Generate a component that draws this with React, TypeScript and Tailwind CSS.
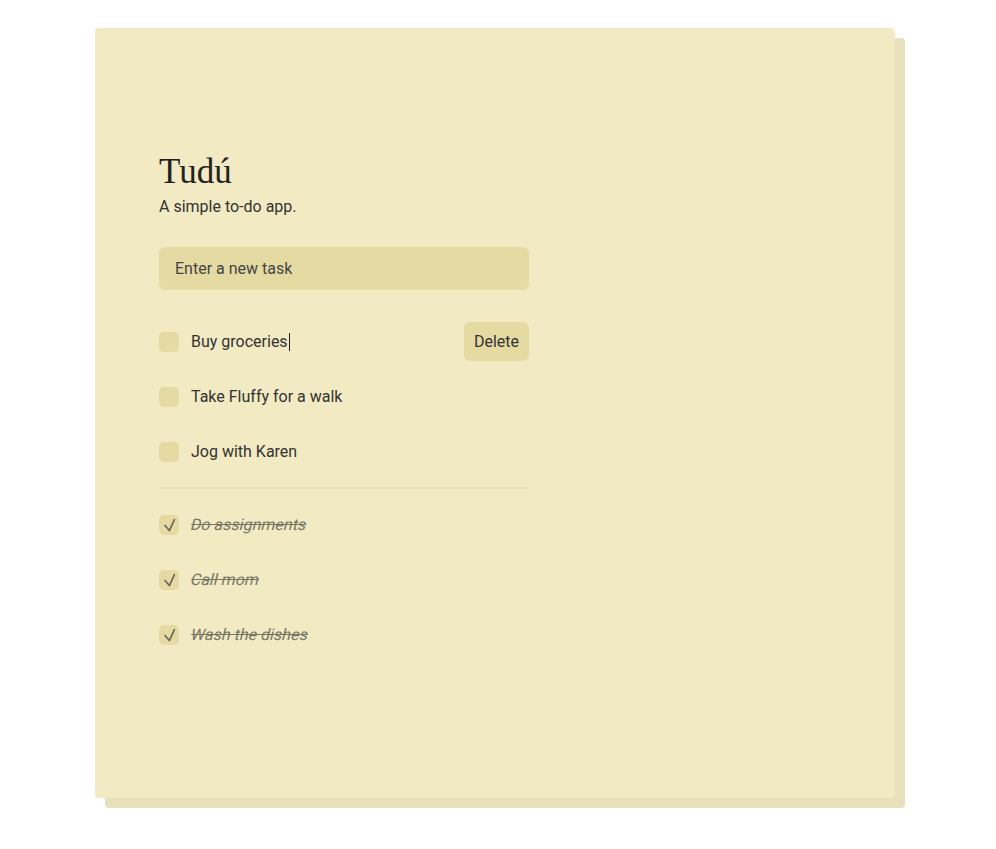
import { useState } from "react";

type Task = { id: number; title: string; done: boolean };

const initialTasks: Task[] = [
  { id: 1, title: "Buy groceries", done: false },
  { id: 2, title: "Take Fluffy for a walk", done: false },
  { id: 3, title: "Jog with Karen", done: false },
  { id: 4, title: "Do assignments", done: true },
  { id: 5, title: "Call mom", done: true },
  { id: 6, title: "Wash the dishes", done: true },
];

function TaskRow({ task, active }: { task: Task; active: boolean }) {
  return (
    <li className="flex h-[39px] items-center gap-3">
      <span className="h-5 w-5 shrink-0 rounded-[5px] bg-[#e5dba2]">
        {task.done && (
          <svg viewBox="0 0 20 20" className="h-5 w-5" fill="none">
            <path d="M6 10.4 L10.4 15.6 L15.4 4.6" stroke="#66645a" strokeWidth="1.6" strokeLinecap="round" strokeLinejoin="round" />
          </svg>
        )}
      </span>
      {task.done ? (
        <span className="flex-1">
          <span className="inline-block -skew-x-[14deg] text-base text-[#777766] line-through">{task.title}</span>
        </span>
      ) : (
        <span className="flex-1 text-base text-[#333333]">
          {task.title}
          {active && <span className="ml-px inline-block h-[18px] w-px translate-y-[4px] bg-[#222]" />}
        </span>
      )}
      {active && (
        <button
          type="button"
          className="h-[39px] rounded-md bg-[#e5dba2] px-[10px] text-base text-[#333333]"
        >
          Delete
        </button>
      )}
    </li>
  );
}

export default function App() {
  const [tasks] = useState(initialTasks);
  const open = tasks.filter((t) => !t.done);
  const done = tasks.filter((t) => t.done);

  return (
    <div className="min-h-[849px] bg-white pl-[95px] pt-[28px] font-['Roboto',sans-serif]">
      <div className="h-[770px] w-[800px] rounded-[4px] bg-[#f2eac2] px-16 pt-[122px] shadow-[10px_10px_0_0_#e6e0bd]">
        <div className="w-[370px]">
          <h1 className="font-['Liberation_Serif',serif] text-[35px] leading-[44px] text-[#222222]">
            Tudú
          </h1>
          <p className="mt-px text-base leading-6 text-[#333333]">A simple to-do app.</p>

          <input
            type="text"
            placeholder="Enter a new task"
            className="mt-[28px] h-[43px] w-full rounded-md bg-[#e5dba2] px-4 text-base text-[#333] outline-none placeholder:text-[#444444]"
          />

          <ul className="mt-8 flex flex-col gap-4">
            {open.map((t, i) => (
              <TaskRow key={t.id} task={t} active={i === 0} />
            ))}
          </ul>

          <hr className="mt-4 border-t-2 border-[#e8e0b8]" />

          <ul className="mt-4 flex flex-col gap-4">
            {done.map((t) => (
              <TaskRow key={t.id} task={t} active={false} />
            ))}
          </ul>
        </div>
      </div>
    </div>
  );
}
